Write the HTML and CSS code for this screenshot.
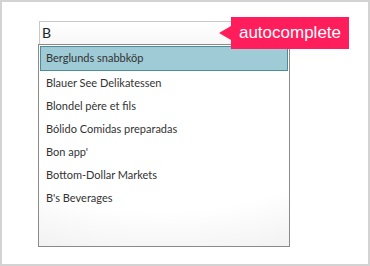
FILE: index.html
```html
<!DOCTYPE html>
<html lang="en">
<head>
  <meta charset="UTF-8">
  <title>Autocomplete</title>
  <meta name="viewport" content="width=device-width, initial-scale=1.0">
  <link rel="stylesheet" href="styles.css">
</head>
<body>
  <div class="frame">
    <div class="campo">B</div>
    <ul class="lista">
      <li class="item ativo">Berglunds snabbköp</li>
      <li class="item">Blauer See Delikatessen</li>
      <li class="item">Blondel père et fils</li>
      <li class="item">Bólido Comidas preparadas</li>
      <li class="item">Bon app'</li>
      <li class="item">Bottom-Dollar Markets</li>
      <li class="item">B's Beverages</li>
    </ul>
    <div class="etiqueta">autocomplete</div>
  </div>
</body>
</html>
```

FILE: styles.css
```css
body {
  margin: 0;
  padding: 0;
  background: #fff;
}

.frame {
  position: relative;
  width: 370px;
  height: 266px;
  border: 2px solid #d3d3d3;
  box-sizing: border-box;
  padding: 19px 0 0 37px;
  font-family: Lato, "Open Sans", sans-serif;
}

.campo {
  width: 251px;
  height: 24px;
  border: 1px solid #c8c8c8;
  box-sizing: border-box;
  padding-left: 2px;
  font-size: 14px;
  line-height: 22px;
  color: #222;
  background: linear-gradient(#fff, #f7f7f7);
}

.lista {
  list-style: none;
  margin: -1px 0 0 -1px;
  width: 252px;
  height: 203px;
  padding: 1px;
  border: 1px solid #8a8a8a;
  box-sizing: border-box;
  background: radial-gradient(ellipse 120% 90% at 50% 20%, #fff 70%, #f1f1f1 100%);
}

.item {
  height: 23px;
  line-height: 23px;
  padding-left: 6px;
  font-size: 11px;
  color: #333;
  white-space: nowrap;
}

.item.ativo {
  line-height: 21px;
  padding-left: 5px;
  background: #9ecbd6;
  border: 1px solid #4c8c9b;
}

.etiqueta {
  position: absolute;
  left: 229px;
  top: 15px;
  width: 118px;
  height: 32px;
  background: #ff1d5c;
  color: #fff;
  font-family: "Liberation Sans", Arial, sans-serif;
  font-size: 17px;
  line-height: 32px;
  text-align: center;
}

.etiqueta::before {
  content: "";
  position: absolute;
  left: -12px;
  top: 9px;
  border-top: 7px solid transparent;
  border-bottom: 7px solid transparent;
  border-right: 12px solid #ff1d5c;
}
```
